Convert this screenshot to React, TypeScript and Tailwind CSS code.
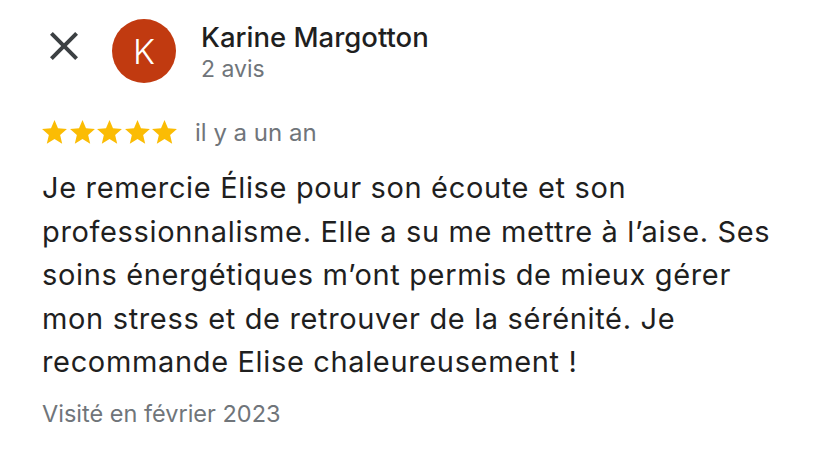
import React from 'react';

const Star: React.FC = () => (
  <svg viewBox="2 2 20 19.3" className="w-[25px] h-[24px] fill-[#fbbc04]">
    <path d="M12 17.27L18.18 21l-1.64-7.03L22 9.24l-7.19-.61L12 2 9.19 8.63 2 9.24l5.46 4.73L5.82 21z" />
  </svg>
);

export default function App() {
  return (
    <div className="w-[828px] h-[460px] bg-white font-['Inter',sans-serif] overflow-hidden">
      <div className="flex items-start pt-[19px] pl-[40px]">
        <button className="mt-[3px] w-[48px] h-[48px] flex items-center justify-center text-[#3c4043]">
          <svg viewBox="0 0 24 24" className="w-[48px] h-[48px] fill-current">
            <path d="M19 6.41L17.59 5 12 10.59 6.41 5 5 6.41 10.59 12 5 17.59 6.41 19 12 13.41 17.59 19 19 17.59 13.41 12z" />
          </svg>
        </button>
        <div className="ml-[24px] w-[64px] h-[64px] rounded-full bg-[#c13a10] flex items-center justify-center text-white text-[34px] font-light">
          K
        </div>
        <div className="ml-[25px] mt-[1px]">
          <div className="text-[27.5px] leading-[34px] font-medium text-[#1f1f1f]">Karine Margotton</div>
          <div className="mt-[1px] text-[23px] leading-[28px] text-[#70757a]">2 avis</div>
        </div>
      </div>

      <div className="px-[42px] mt-[37px]">
        <div className="flex items-start">
          <div className="flex gap-[2.5px]">
            <Star />
            <Star />
            <Star />
            <Star />
            <Star />
          </div>
          <span className="ml-[18px] -mt-[1px] text-[24px] leading-[28px] text-[#70757a]">il y a un an</span>
        </div>
        <p className="mt-[19px] text-[29px] leading-[43.5px] tracking-[0.65px] text-[#1f1f1f]">
          Je remercie Élise pour son écoute et son professionnalisme. Elle a su me mettre à l’aise. Ses soins énergétiques m’ont permis de mieux gérer mon stress et de retrouver de la sérénité. Je recommande Elise chaleureusement !
        </p>
        <div className="mt-[16px] text-[23.5px] leading-[28px] text-[#70757a]">Visité en février 2023</div>
      </div>
    </div>
  );
}
